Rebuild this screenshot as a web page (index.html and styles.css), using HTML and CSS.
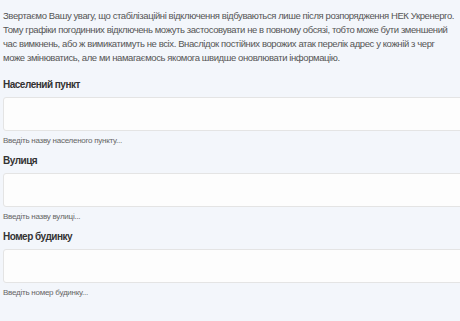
FILE: index.html
```html
<!DOCTYPE html>
<html lang="uk">
<head>
    <meta charset="UTF-8">
    <meta name="viewport" content="width=device-width, initial-scale=1.0">
    <title>Пошук адреси</title>
    <link rel="stylesheet" href="styles.css">
</head>
<body>
    <div class="container">
        <p class="notice">Звертаємо Вашу увагу, що стабілізаційні відключення відбуваються лише після розпорядження НЕК Укренерго. Тому графіки погодинних відключень можуть застосовувати не в повному обсязі, тобто може бути зменшений час вимкнень, або ж вимикатимуть не всіх. Внаслідок постійних ворожих атак перелік адрес у кожній з черг може змінюватись, але ми намагаємось якомога швидше оновлювати інформацію.</p>

        <div class="field">
            <label class="label" for="city">Населений пункт</label>
            <input class="input" id="city" type="text">
            <div class="hint">Введіть назву населеного пункту...</div>
        </div>

        <div class="field">
            <label class="label" for="street">Вулиця</label>
            <input class="input" id="street" type="text">
            <div class="hint">Введіть назву вулиці...</div>
        </div>

        <div class="field">
            <label class="label" for="house">Номер будинку</label>
            <input class="input" id="house" type="text">
            <div class="hint">Введіть номер будинку...</div>
        </div>
    </div>
</body>
</html>
```

FILE: styles.css
```css
body {
    font-family: 'Liberation Sans', Arial, sans-serif;
    background: #f3f6fb;
    margin: 0;
    overflow: hidden;
}
.container {
    padding: 9px 3px 0;
}
.notice {
    margin: 0 0 13px;
    font-size: 9.5px;
    line-height: 14px;
    letter-spacing: -0.4px;
    color: #555;
}
.field {
    margin-bottom: 8px;
}
.label {
    display: block;
    font-size: 10px;
    line-height: 14px;
    letter-spacing: -0.5px;
    font-weight: bold;
    color: #333;
    margin-bottom: 5px;
}
.input {
    display: block;
    box-sizing: border-box;
    width: calc(100% + 20px);
    height: 34px;
    margin: 0;
    padding: 0 8px;
    background: #fdfdfd;
    border: 1px solid #e4e4e4;
    border-radius: 3px;
    font-family: inherit;
    font-size: 11px;
}
.hint {
    margin-top: 5px;
    font-size: 8px;
    line-height: 10px;
    letter-spacing: -0.25px;
    color: #666;
}
```
